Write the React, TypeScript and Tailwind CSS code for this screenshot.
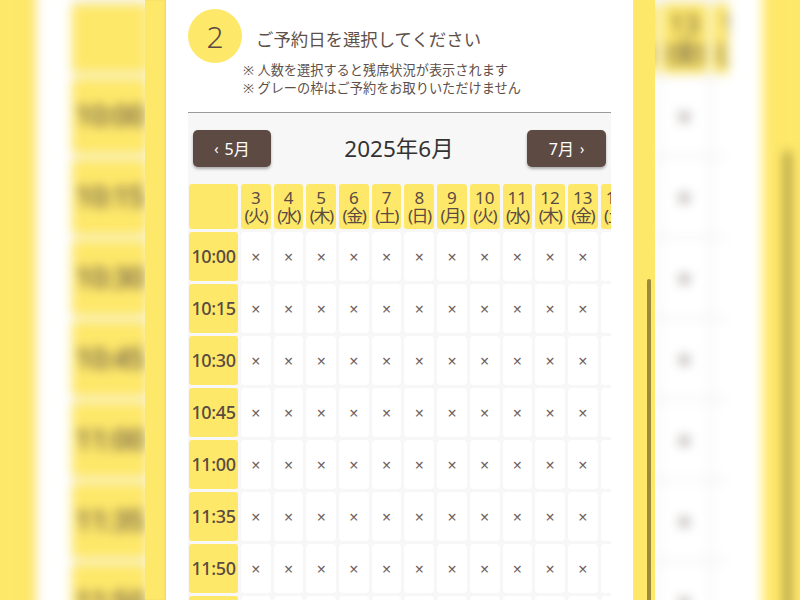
import React from "react";

const WEEK = ["日", "月", "火", "水", "木", "金", "土"];
// June 2025 starts on a Sunday
const days = Array.from({ length: 28 }, (_, i) => {
  const d = i + 3;
  return { d, w: WEEK[(d - 1) % 7] };
});
const times = ["10:00", "10:15", "10:30", "10:45", "11:00", "11:35", "11:50", "12:05", "12:20"];

const font = "font-['Noto_Sans','Noto_Sans_CJK_JP',sans-serif]";

function Schedule() {
  return (
    <div className="flex h-[600px] w-[510px] shrink-0">
      <div className="w-[21px] bg-[#fee86a] shadow-[inset_-1px_0_2px_rgba(0,0,0,0.08)]" />
      <main className="w-[467px] bg-white px-[22px]">
        {/* step heading */}
        <div className="mt-[9px] flex h-[54px] items-center">
          <div className="flex h-[54px] w-[54px] items-center justify-center rounded-full bg-[#fee86a] text-[30px] font-light text-[#5a4a42]">
            2
          </div>
          <h2 className="ml-[14px] mt-[6px] text-[17.4px] text-[#5e5049]">ご予約日を選択してください</h2>
        </div>
        <div className="-mt-[2px] pl-[55px] text-[13.2px] leading-[18px] text-[#5e5049]">
          <p>※ 人数を選択すると残席状況が表示されます</p>
          <p>※ グレーの枠はご予約をお取りいただけません</p>
        </div>
        <div className="mt-[15px] border-t border-[#9a9a9a]" />

        <div className="bg-[#f7f7f7] pt-[17px]">
          <div className="flex items-center justify-between px-[5px]">
            <button className="flex h-[37px] w-[78px] items-center justify-center gap-[6px] rounded-[5px] bg-[#5d4b43] text-[16px] text-white shadow-[0_2px_3px_rgba(0,0,0,0.3)]">
              <span className="text-[14px]">‹</span>5月
            </button>
            <div className="text-[22.5px] text-[#333]">2025年6月</div>
            <button className="flex h-[37px] w-[79px] items-center justify-center gap-[6px] rounded-[5px] bg-[#5d4b43] text-[16px] text-white shadow-[0_2px_3px_rgba(0,0,0,0.3)]">
              7月<span className="text-[14px]">›</span>
            </button>
          </div>

          <div className="mt-[17px] overflow-hidden pl-px">
            <div className="flex w-max flex-col gap-[3px]">
              <div className="flex gap-[3px]">
                <div className="h-[45px] w-[49px] rounded-[3px] bg-[#fee86a]" />
                {days.map((x) => (
                  <div
                    key={x.d}
                    className="flex h-[45px] w-[29.7px] flex-col items-center justify-center rounded-[3px] bg-[#fee86a] text-[17px] leading-[18px] text-[#5a4a42]"
                  >
                    <span>{x.d}</span>
                    <span className="whitespace-nowrap tracking-[-1.5px]">({x.w})</span>
                  </div>
                ))}
              </div>
              {times.map((t) => (
                <div key={t} className="flex gap-[3px]">
                  <div className="flex h-[49px] w-[49px] items-center justify-center rounded-[3px] bg-[#fee86a] text-[18px] font-medium tracking-[-0.4px] text-[#5a4a42]">
                    {t}
                  </div>
                  {days.map((x) => (
                    <div
                      key={x.d}
                      className="flex h-[49px] w-[29.7px] items-center justify-center rounded-[4px] bg-white text-[16px] text-[#6f625c]"
                    >
                      ×
                    </div>
                  ))}
                </div>
              ))}
            </div>
          </div>
        </div>
      </main>
      <div className="relative w-[22px] bg-[#fee86a]">
        <div className="absolute left-[14px] top-[279px] h-[330px] w-[4px] rounded-t-[2px] bg-[#9a8a3c]" />
      </div>
    </div>
  );
}

export default function App() {
  return (
    <div className={`relative h-[600px] w-[800px] overflow-hidden bg-[#fee86a] ${font}`}>
      {/* blurred enlarged copy behind */}
      <div
        aria-hidden
        className="absolute inset-0 flex origin-[400px_509px] scale-[1.556] justify-center blur-[3.5px]"
      >
        <Schedule />
      </div>
      <div className="relative flex justify-center">
        <Schedule />
      </div>
    </div>
  );
}
